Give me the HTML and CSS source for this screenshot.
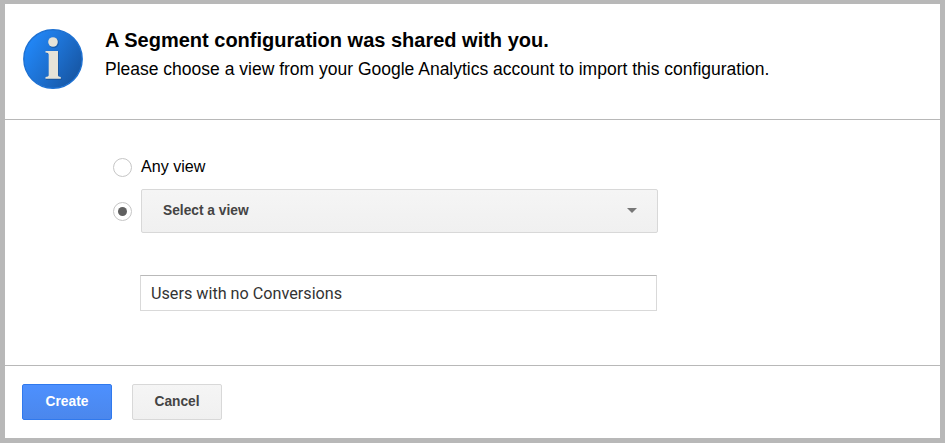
FILE: index.html
```
<!DOCTYPE html>
<html lang="en">
<head>
  <meta charset="UTF-8">
  <meta name="viewport" content="width=device-width, initial-scale=1.0">
  <title>Import configuration - Google Analytics</title>
  <link rel="stylesheet" href="styles.css">
</head>
<body>
  <form class="dialog">
    <!-- Header -->
    <div class="header">
      <svg class="info-icon" width="60" height="60" viewBox="0 0 60 60">
        <defs>
          <linearGradient id="disc" x1="0.1" y1="0.2" x2="0.95" y2="0.75">
            <stop offset="0" stop-color="#2186f6"/>
            <stop offset="0.5" stop-color="#1d70d0"/>
            <stop offset="1" stop-color="#1757a5"/>
          </linearGradient>
        </defs>
        <circle cx="30" cy="30" r="29.2" fill="url(#disc)" stroke="#1e71d2" stroke-width="1.4"/>
        <g fill="#174f91" opacity="0.6">
          <circle cx="30.7" cy="13.8" r="5.2"/>
          <path d="M23 22.5h13V47q0 1.5 2.5 1.8V51H23v-2.2q3.4-.3 3.4-1.8V26q0-1.5-3.4-1.8z"/>
        </g>
        <g fill="#e6e3d8">
          <circle cx="30" cy="13" r="4.8"/>
          <path d="M22.5 22H35v24.5q0 1.3 2.8 1.6v1.7H22.5v-1.7q3.2-.3 3.2-1.6V25.2q0-1.3-3.2-1.6z"/>
        </g>
      </svg>
      <div>
        <h1 class="title">A Segment configuration was shared with you.</h1>
        <p class="subtitle">Please choose a view from your Google Analytics account to import this configuration.</p>
      </div>
    </div>

    <!-- View choice and name -->
    <div class="content">
      <label class="option option-any">
        <input type="radio" name="view" class="radio">
        <span class="option-text">Any view</span>
      </label>
      <div class="option">
        <input type="radio" name="view" class="radio" checked>
        <div class="select">
          <span>Select a view</span>
          <span class="arrow"></span>
        </div>
      </div>
      <input type="text" class="name" value="Users with no Conversions">
    </div>

    <!-- Buttons -->
    <div class="footer">
      <button type="button" class="btn btn-primary">Create</button>
      <button type="button" class="btn">Cancel</button>
    </div>
  </form>
</body>
</html>
```
FILE: styles.css
```
* {
  box-sizing: border-box;
}

body {
  margin: 0;
  padding: 4px 5px 5px;
  height: 443px;
  background-color: #b8b8b8;
  font-family: "Liberation Sans", Arial, sans-serif;
  color: #000;
}

.dialog {
  display: flex;
  flex-direction: column;
  height: 434px;
  background-color: #fff;
}

/* Header */
.header {
  display: flex;
  height: 116px;
  padding: 25px 18px 0;
  border-bottom: 1px solid #b8b8b8;
}

.info-icon {
  margin-right: 22px;
}

.title {
  margin: 0;
  font-size: 20px;
  line-height: 23px;
  white-space: nowrap;
}

.subtitle {
  margin: 7px 0 0;
  font-size: 17.5px;
  line-height: 21px;
  white-space: nowrap;
}

/* View choice */
.content {
  height: 246px;
  padding: 35px 0 0 108px;
  border-bottom: 1px solid #b8b8b8;
}

.option {
  display: flex;
  align-items: center;
}

.option-any {
  height: 24px;
  margin-bottom: 10px;
}

.option-text {
  font-size: 16.1px;
  line-height: 20px;
  margin-top: -3px;
}

.radio {
  appearance: none;
  flex: none;
  display: grid;
  place-items: center;
  width: 19px;
  height: 19px;
  margin: 1px 9px 0 0;
  border: 1px solid #c6c6c6;
  border-radius: 50%;
  background-color: #fff;
}

.radio:checked::before {
  content: "";
  width: 9px;
  height: 9px;
  border-radius: 50%;
  background-color: #606060;
}

.select {
  display: flex;
  align-items: center;
  justify-content: space-between;
  width: 517px;
  height: 44px;
  padding: 0 20px 2px 21px;
  border: 1px solid #d8d8d8;
  border-radius: 2px;
  background-image: linear-gradient(#f5f5f5, #f0f0f0);
  color: #444;
  font-size: 13.75px;
  font-weight: bold;
}

.arrow {
  border: 5px solid transparent;
  border-top-color: #777;
  border-bottom: 0;
}

.name {
  display: block;
  width: 517px;
  height: 36px;
  margin: 42px 0 0 27px;
  padding: 1px 10px;
  border: 1px solid #d9d9d9;
  border-top-color: #b9b9b9;
  font-family: Roboto, sans-serif;
  font-size: 16.2px;
  color: #333;
}

/* Buttons */
.footer {
  display: flex;
  gap: 20px;
  padding: 18px 17px;
}

.btn {
  width: 90px;
  height: 36px;
  padding: 0 0 2px;
  border: 1px solid #d8d8d8;
  border-radius: 2px;
  background-image: linear-gradient(#f5f5f5, #f0f0f0);
  color: #444;
  font-family: inherit;
  font-size: 13.75px;
  font-weight: bold;
}

.btn-primary {
  border-color: #3079ed;
  background-image: linear-gradient(#4d90fe, #4b87ec);
  color: #fff;
}
```
